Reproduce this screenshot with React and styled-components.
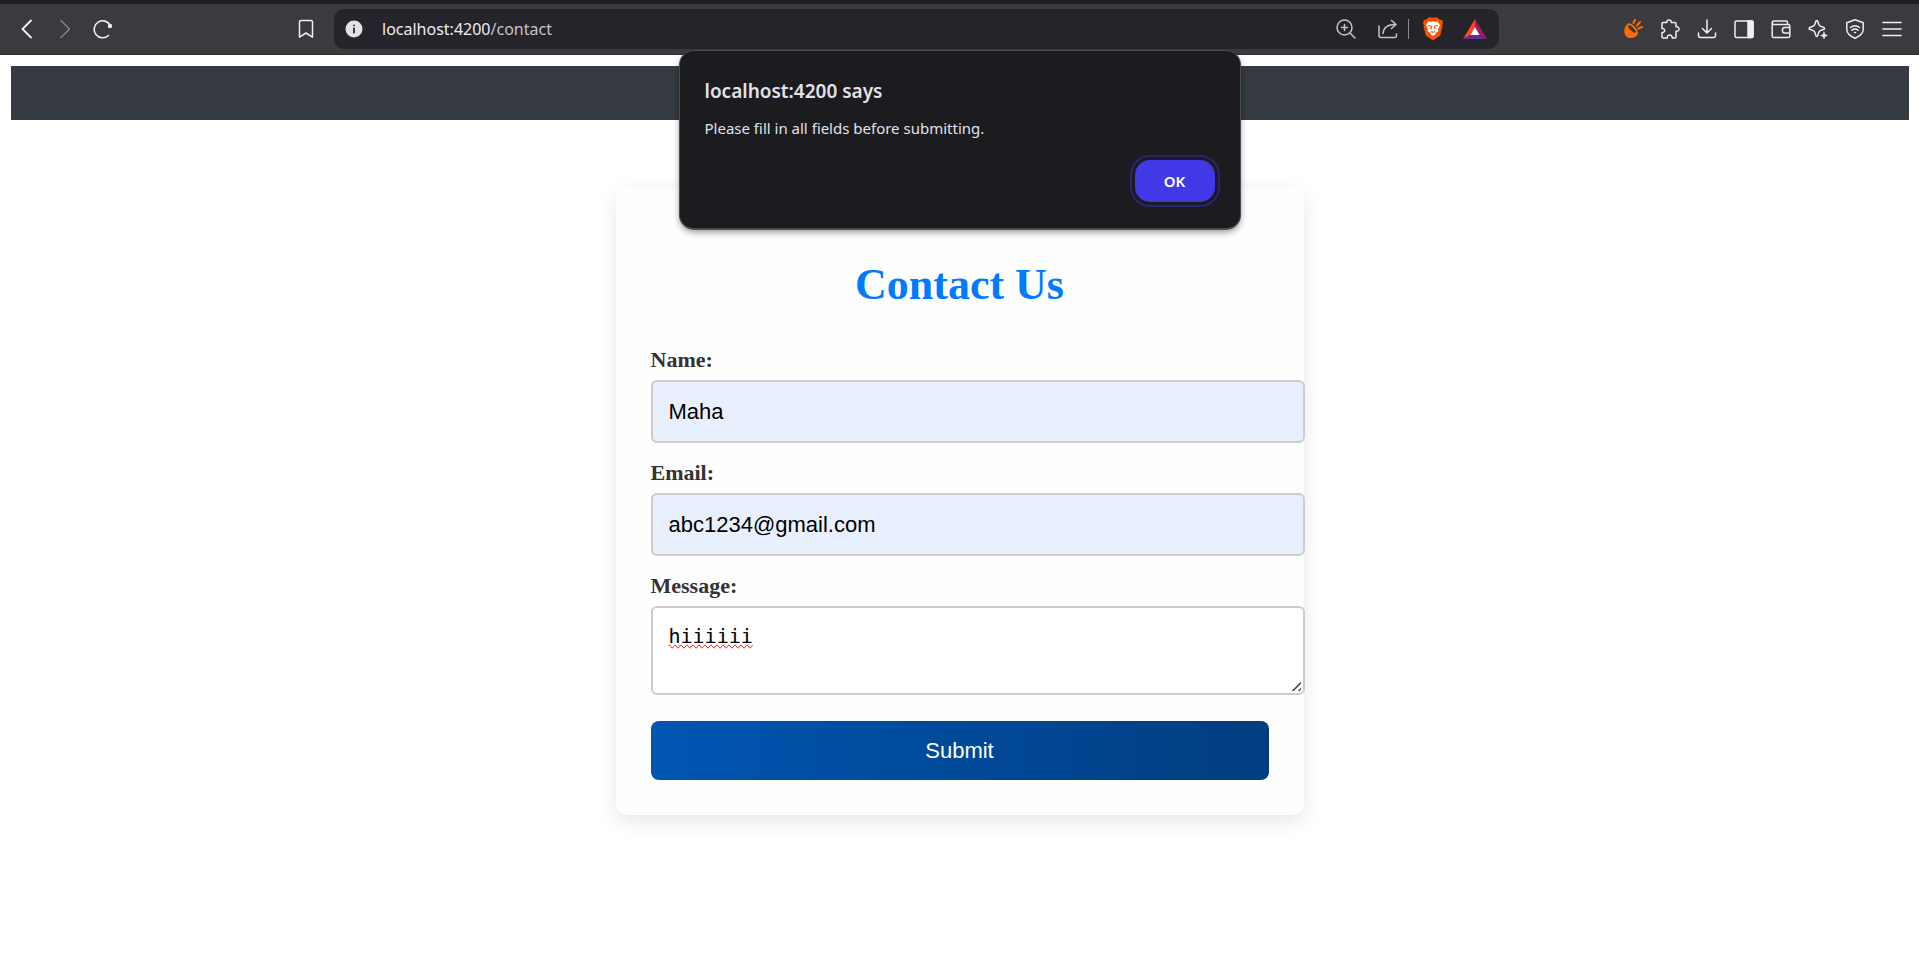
import React, { useState } from "react";
import styled, { createGlobalStyle } from "styled-components";

const uiFont = `"Noto Sans", "Open Sans", sans-serif`;
const serifFont = `"Liberation Serif", "Times New Roman", serif`;
const sansFont = `"Liberation Sans", Arial, sans-serif`;
const monoFont = `"DejaVu Sans Mono", Consolas, monospace`;

const GlobalStyle = createGlobalStyle`
  body {
    margin: 0;
    background: #fff;
    font-family: ${serifFont};
  }
`;

const Page = styled.div`
  box-sizing: border-box;
  min-height: 100vh;
  padding-bottom: 40px;
`;

const Toolbar = styled.header`
  display: flex;
  align-items: center;
  box-sizing: border-box;
  height: 55px;
  padding: 0 17px;
  border-top: 4px solid #1f1e23;
  border-bottom: 1px solid #2c2b30;
  background: #3b3a3f;
`;

const IconGroup = styled.div`
  display: flex;
  align-items: center;
  gap: ${(p) => p.$gap}px;
`;

const IconButton = styled.button`
  display: flex;
  align-items: center;
  justify-content: center;
  width: 20px;
  height: 24px;
  padding: 0;
  border: 0;
  background: none;
  color: ${(p) => p.$color || "#efeff2"};

  svg {
    flex: none;
  }
`;

const AddressArea = styled.div`
  display: flex;
  align-items: center;
  gap: 18px;
  flex: 1;
  margin: 0 124px 0 183px;
`;

const AddressBar = styled.div`
  display: flex;
  align-items: center;
  flex: 1;
  height: 40px;
  box-sizing: border-box;
  padding: 0 14px 0 10px;
  border-radius: 10px;
  background: #25242a;
`;

const Url = styled.span`
  flex: 1;
  margin-left: 18px;
  font: 400 16px/24px ${uiFont};
  color: #c4c3ca;
`;

const Host = styled.span`
  color: #ececf0;
`;

const Divider = styled.span`
  width: 1px;
  height: 20px;
  margin: 0 14px 0 10px;
  background: #8b8a91;
`;

const NavBand = styled.nav`
  height: 54px;
  margin: 11px 10px 0 11px;
  background: #363a42;
`;

const Card = styled.main`
  box-sizing: border-box;
  width: 688px;
  max-width: 100%;
  margin: 68px auto 0;
  padding: 35px;
  border-radius: 11px;
  background: #fefefe;
  box-shadow: 0 6px 20px rgba(0, 0, 0, 0.1);
`;

const Title = styled.h1`
  margin: 37px 0;
  font-size: 44px;
  line-height: 50px;
  text-align: center;
  color: #007bff;
`;

const Field = styled.div`
  margin-bottom: 17px;
`;

const Label = styled.label`
  display: block;
  margin-bottom: 8px;
  font-size: 22px;
  font-weight: bold;
  line-height: 25px;
  color: #333;
`;

const TextInput = styled.input`
  display: block;
  width: 100%;
  height: 27px;
  padding: 16px;
  border: 2px solid #ccc;
  border-radius: 6px;
  background: #e8f0fe;
  font: 22px ${sansFont};
  color: #000;
`;

const TextArea = styled.textarea`
  display: block;
  width: 100%;
  height: 53px;
  padding: 16px;
  border: 2px solid #ccc;
  border-radius: 6px;
  background: #fff;
  font: 20px/24px ${monoFont};
  color: #000;
  text-decoration: spelling-error;
  text-decoration-skip-ink: none;

  &::-webkit-resizer {
    background: linear-gradient(
        135deg,
        transparent 9px,
        #555 9px,
        #555 10px,
        transparent 11px,
        transparent 13px,
        #555 13px,
        #555 14px,
        transparent 15px
      )
      2px 2px / 11px 11px no-repeat;
  }
`;

const SubmitButton = styled.button`
  display: block;
  width: 100%;
  height: 59px;
  margin-top: 26px;
  border: 0;
  border-radius: 8px;
  background: linear-gradient(to right, #0056b3, #003d80);
  font: 22px ${sansFont};
  color: #fff;
`;

const Alert = styled.section`
  position: absolute;
  top: 50px;
  left: 50%;
  transform: translateX(-50%);
  box-sizing: border-box;
  width: 562px;
  padding: 26px 25px;
  border: 1px solid #4b4a50;
  border-bottom-width: 2px;
  border-radius: 15px;
  background: #1c1b1f;
  box-shadow: 0 3px 6px rgba(0, 0, 0, 0.35);
  font-family: ${uiFont};
  color: #e3e2e8;
`;

const AlertTitle = styled.h2`
  margin: 0;
  font-size: 19px;
  font-weight: 600;
  line-height: 28px;
`;

const AlertText = styled.p`
  margin: 12px 0 21px;
  font-size: 15px;
  line-height: 22px;
`;

const AlertActions = styled.div`
  display: flex;
  justify-content: flex-end;
`;

const OkButton = styled.button`
  width: 80px;
  height: 42px;
  border: 0;
  border-radius: 15px;
  outline: 2px solid #29256f;
  outline-offset: 3px;
  background: #4138e6;
  font: 600 15px ${uiFont};
  color: #fff;
`;

const Svg = ({ children, sw = 1.5 }) => (
  <svg width="20" height="20" viewBox="0 0 20 20" fill="none" stroke="currentColor" strokeWidth={sw} strokeLinecap="round" strokeLinejoin="round" aria-hidden="true">
    {children}
  </svg>
);

const BackIcon = () => <Svg sw={1.8}><path d="M14 1.500 5.500 10l8.500 8.500" /></Svg>;
const ForwardIcon = () => <Svg><path d="m6 1.500 8.500 8.500L6 18.500" /></Svg>;
const ReloadIcon = () => (
  <Svg sw={1.6}><path d="M15.500 16.500A8.500 8.500 0 1 1 17.300 6.500" /><circle cx="17" cy="7" r="2.200" fill="currentColor" stroke="none" /></Svg>
);
const BookmarkIcon = () => <Svg><path d="M3.500 18.200V3A1.500 1.500 0 0 1 5 1.500h10A1.500 1.500 0 0 1 16.500 3v15.200L10 14z" /></Svg>;
const InfoIcon = () => (
  <Svg><circle cx="10" cy="10" r="8.500" fill="#e2e1e9" stroke="none" /><path d="M10 9.500v4M10 6.300v.1" stroke="#25242a" strokeWidth="1.800" /></Svg>
);
const ZoomIcon = () => <Svg><circle cx="8.500" cy="8.500" r="7.500" /><path d="m14 14 5 5M8.500 5.500v6M5.500 8.500h6" /></Svg>;
const ShareIcon = () => <Svg><path d="M1 7v9.500A2 2 0 0 0 3 18.500h13.500a2 2 0 0 0 2-2V15M5 14.500C5.500 8.500 9 5.500 17.500 5.500M13.500 1.500l4.500 4-4.500 4" /></Svg>;
const BraveIcon = () => (
  <svg width="20" height="24" viewBox="0 0 20 24" aria-hidden="true">
    <path d="M5.500.5h9L17 3l2-.2 1 3.200-.8 2 .3 1-2.300 9.500L10 23.500l-7.200-5L.5 9l.3-1L0 6l1-3.200L3 3z" fill="#fb5000" />
    <path d="m5.500 4.500 2.500.5 2-.7 2 .7 2.500-.5 2.500 3.500-2 4.500.5 1.500-3 2 .5 1-3 2-3-2 .5-1-3-2 .5-1.500-2-4.500z" fill="#fff" />
    <path d="m5.200 8.300 3.300 1-.5 3M14.800 8.300l-3.300 1 .5 3M8 14.500l2 .8 2-.8" fill="none" stroke="#fb5000" strokeWidth="1.200" />
  </svg>
);
const BatIcon = () => (
  <svg width="24" height="20" viewBox="0 0 24 20" aria-hidden="true">
    <path d="M12 0 0 20l7.500-4L12 8z" fill="#ff4724" />
    <path d="m12 0 12 20-7.500-4L12 8z" fill="#9e1f63" />
    <path d="m0 20 7.500-4h9l7.500 4z" fill="#662d91" />
    <path d="m12 8 4.500 8h-9z" fill="#fff" />
  </svg>
);
const FlashIcon = () => (
  <Svg><path d="M4 5.500C-1 11 1.500 19 7 19c4 0 7.500-1.500 8-5z" fill="currentColor" stroke="none" /><ellipse cx="9" cy="10" rx="2.600" ry="6" transform="rotate(-45 9 10)" fill="#3b3a3f" strokeWidth="1.800" /><path d="m10.500 4 1.500-3M14 6.500 17 3M15.500 9.500l3.500-1.500" strokeWidth="2" /></Svg>
);
const PuzzleIcon = () => <Svg><path d="M3 3.500h3.800C6 0 12 0 11.200 3.500H15a1 1 0 0 1 1 1v3.300c4-.8 4 5.200 0 4.400V18a1 1 0 0 1-1 1h-2.800c.5-4-5.500-4-5 0H3a1 1 0 0 1-1-1v-4.500c3.500.5 3.500-4.500 0-4V4.500a1 1 0 0 1 1-1z" /></Svg>;
const DownloadIcon = () => <Svg><path d="M10 1v13M5.500 9.500 10 14l4.500-4.500M1.500 14v2.500a2 2 0 0 0 2 2h13a2 2 0 0 0 2-2V14" /></Svg>;
const SidebarIcon = () => <Svg><rect x="1" y="2" width="18" height="16.500" rx="1.500" /><path d="M14 2h4a1 1 0 0 1 1 1v14.500a1 1 0 0 1-1 1h-4z" fill="currentColor" /></Svg>;
const WalletIcon = () => <Svg><path d="M1.200 3.500v13.500A1.500 1.500 0 0 0 2.700 18.500h14.600a1.500 1.500 0 0 0 1.500-1.500V7a1.500 1.500 0 0 0-1.500-1.500H3a1.700 1.700 0 0 1 0-3.500h12a1.500 1.500 0 0 1 1.500 1.500v2M18.500 8.500h-5a2 2 0 0 0-2 2v1.500a2 2 0 0 0 2 2h5" /></Svg>;
const SparkleIcon = () => <Svg><path d="M8.800 1.500c.6 0 .9.400 1 1 1 4 1.500 4.700 5.500 5.800 1.600.4 1.600 1.800 0 2.300-4 1-4.500 1.600-5.500 5.800-.3 1.500-1.700 1.500-2 0-1-4.200-1.500-4.800-5.500-5.800-1.600-.5-1.600-1.900 0-2.300 4-1.100 4.500-1.800 5.500-5.800.1-.6.4-1 1-1z" /><path d="m16 13 1 2.500 2.500 1-2.500 1-1 2.500-1-2.500-2.500-1 2.500-1z" fill="currentColor" strokeWidth=".5" /></Svg>;
const ShieldIcon = () => <Svg><path d="m10 .8 8.200 3v6.700c0 4-3.700 6.800-8.200 8.700-4.500-1.900-8.200-4.700-8.200-8.700V3.800zM5.500 8.500c3-2.300 6-2.300 9 0M7 11.200c2-1.500 4-1.500 6 0M9.500 13.500h1" /></Svg>;
const MenuIcon = () => <Svg sw={1.6}><path d="M1 3.500h18M1 10h18M1 16.500h18" /></Svg>;

const extensions = [
  ["Rewards", FlashIcon, "#ff6a0a"],
  ["Extensions", PuzzleIcon],
  ["Downloads", DownloadIcon],
  ["Sidebar", SidebarIcon],
  ["Wallet", WalletIcon],
  ["Leo AI", SparkleIcon],
  ["VPN", ShieldIcon],
  ["Menu", MenuIcon],
];

export default function App() {
  const [name, setName] = useState("Maha");
  const [email, setEmail] = useState("abc1234@gmail.com");
  const [message, setMessage] = useState("hiiiiii");

  return (
    <Page>
      <GlobalStyle />
      <Toolbar>
        <IconGroup $gap={18}>
          <IconButton aria-label="Back"><BackIcon /></IconButton>
          <IconButton aria-label="Forward" $color="#86858a"><ForwardIcon /></IconButton>
          <IconButton aria-label="Reload"><ReloadIcon /></IconButton>
        </IconGroup>
        <AddressArea>
          <IconButton aria-label="Bookmark"><BookmarkIcon /></IconButton>
          <AddressBar>
            <IconButton aria-label="Site information"><InfoIcon /></IconButton>
            <Url><Host>localhost:4200</Host>/contact</Url>
            <IconGroup $gap={22}>
              <IconButton aria-label="Zoom" $color="#c4c3ca"><ZoomIcon /></IconButton>
              <IconButton aria-label="Share" $color="#c4c3ca"><ShareIcon /></IconButton>
            </IconGroup>
            <Divider />
            <IconGroup $gap={22}>
              <IconButton aria-label="Brave Shields"><BraveIcon /></IconButton>
              <IconButton aria-label="Brave Rewards"><BatIcon /></IconButton>
            </IconGroup>
          </AddressBar>
        </AddressArea>
        <IconGroup $gap={17}>
          {extensions.map(([label, Icon, color]) => (
            <IconButton key={label} aria-label={label} $color={color}><Icon /></IconButton>
          ))}
        </IconGroup>
      </Toolbar>

      <NavBand />

      <Card>
        <Title>Contact Us</Title>
        <form onSubmit={(e) => e.preventDefault()}>
          <Field>
            <Label htmlFor="name">Name:</Label>
            <TextInput id="name" type="text" value={name} onChange={(e) => setName(e.target.value)} />
          </Field>
          <Field>
            <Label htmlFor="email">Email:</Label>
            <TextInput id="email" type="email" value={email} onChange={(e) => setEmail(e.target.value)} />
          </Field>
          <Field>
            <Label htmlFor="message">Message:</Label>
            <TextArea id="message" value={message} onChange={(e) => setMessage(e.target.value)} />
          </Field>
          <SubmitButton type="submit">Submit</SubmitButton>
        </form>
      </Card>

      <Alert role="alertdialog" aria-labelledby="alert-title" aria-describedby="alert-text">
        <AlertTitle id="alert-title">localhost:4200 says</AlertTitle>
        <AlertText id="alert-text">Please fill in all fields before submitting.</AlertText>
        <AlertActions><OkButton type="button">OK</OkButton></AlertActions>
      </Alert>
    </Page>
  );
}
